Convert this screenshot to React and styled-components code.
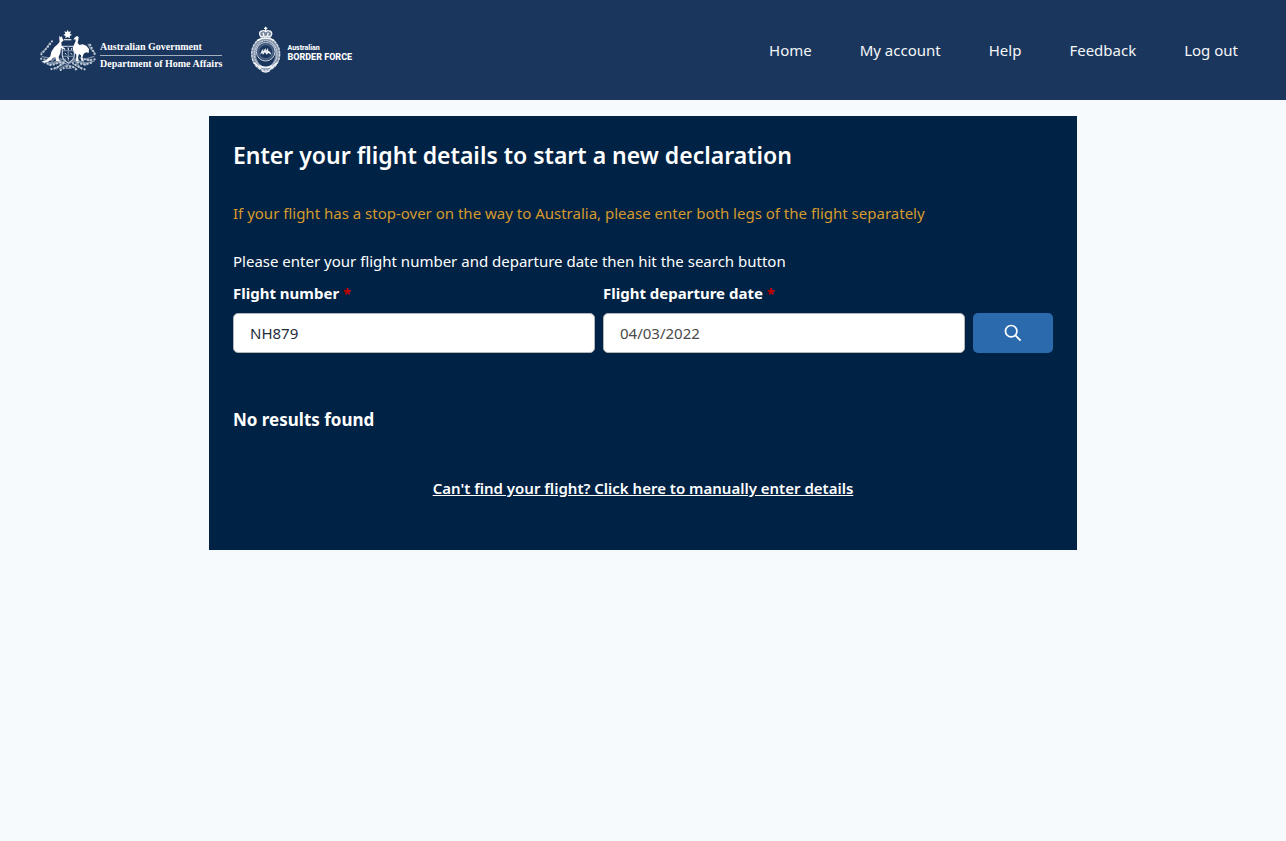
import React, { useState } from "react";
import styled, { createGlobalStyle } from "styled-components";

const navItems = ["Home", "My account", "Help", "Feedback", "Log out"];

const CoatOfArms = () => (
  <svg width="64" height="54" viewBox="0 0 192 162" fill="none" aria-hidden="true">
    {/* wattle */}
    <g stroke="#7d8fa8" strokeWidth="4">
      <path d="M14 91q20-15 28-33M18 115q35 12 64-7M178 91q-15-11-22-29M176 114q-36 15-66-6" />
      <path d="M35 126q36-20 60-1q24-21 62 0M53 139l32-18m53 17-30-17M70 138q26-23 54 2" />
      <path d="M17 101l22 4-15 12 33-13-18 23 37-21M175 100l-22 7 17 9-36-11 17 22-35-20" />
      <path d="M51 123l38-9m-28 25 28-32m49 33-26-32m-23 28h18" />
    </g>
    <g stroke="#c3cdd9" strokeWidth="6" strokeLinecap="round" strokeDasharray="1 9">
      <path d="M16 94l26-30 6-9M15 107l22 5 15-4M25 118l22 9 23-9 18 3M46 138l16-4 20-14M176 93l-14-29M176 109l-18 3-14-4M165 120l-23 5-22-9M146 139l-15-6-20-13M74 141l17-10 20 1 11 9" />
    </g>
    {/* star */}
    <path
      d="M95 20l3 7 7-2-3 7 6 4-7 3 1 7-7-4-7 4 1-7-7-3 6-4-3-7 7 2z"
      fill="#fff"
    />
    <path d="M84 50h22" stroke="#cfd7e1" strokeWidth="4" />
    {/* shield */}
    <path d="M79 70h36v27q0 14-18 23-18-9-18-23z" stroke="#b8c4d3" strokeWidth="4" />
    <path d="M80 83h34M97 70v45M81 100h31" stroke="#71849f" strokeWidth="4" />
    <path d="M86 75v6m11-6v6m10-6v6M87 90l4 5m12-5l6 5m-15 7l5 6" stroke="#dce2e9" strokeWidth="3" />
    {/* kangaroo */}
    <path
      d="M70 38l4 5 4-3 1 6 4 6-4 4-3 1 1 12 8 6-1 4-9-4-2 15-5 12 1 8 5 5-14-1-2-12-8 3-13 11-15 2-6-1 15-5 12-12 3-14 9-13 10-9 6-8-1-6z"
      fill="#fff"
    />
    {/* emu */}
    <path
      d="M117 43l6-4 5 3-1 8-2 9 5 7 10-2 11 4 8 10-1 12-7-2-8 4-4 12 4 10-7-1-1-16-6-4-3 10 2 12-8-1 1-19-8-9-3-12 5-11 4-9-1-5-6 1z"
      fill="#fff"
    />
  </svg>
);

const BorderForceCrest = () => (
  <svg width="32" height="49" viewBox="15 18 96 147" fill="none" aria-hidden="true">
    {/* crown */}
    <path
      d="M47 49q-8-12 3-16 7-3 12 2 5-5 12-2 11 4 3 16z"
      fill="#708198"
      stroke="#f1f4f7"
      strokeWidth="4"
    />
    <path d="M62 20v16M57 25h10M54 38l3 9m13-9-3 9M47 54h30" stroke="#fff" strokeWidth="4" />
    {/* wreath */}
    <ellipse cx="62" cy="102" rx="36" ry="45" stroke="#8999b0" strokeWidth="14" />
    <ellipse cx="62" cy="102" rx="42" ry="49" stroke="#d5dde6" strokeWidth="4" strokeDasharray="8 3" />
    <ellipse cx="62" cy="102" rx="34" ry="40" stroke="#dce2ea" strokeWidth="3" strokeDasharray="5 3" />
    <path d="M36 62q26-15 52 0M28 128l20 18m28 0 20-18" stroke="#fff" strokeWidth="4" />
    <circle cx="62" cy="95" r="28" fill="#3d567a" stroke="#c5d0dc" strokeWidth="3" />
    <circle cx="62" cy="95" r="21" fill="#1b365d" stroke="#6c819c" strokeWidth="2" />
    <path
      d="M46 104q2-14 9-18l-2 9 9-11 1 8 6-8 1 9q7 1 9 11l-9-5-5 5-5-7-6 7-3-5z"
      fill="#e9edf2"
    />
    <path d="M43 137q19 11 38 0M50 152q12 8 24 0" stroke="#eef2f6" strokeWidth="5" />
  </svg>
);

const SearchIcon = () => (
  <svg width="18" height="18" viewBox="0 0 18 18" fill="none" aria-hidden="true">
    <circle cx="7.2" cy="7.2" r="5.7" stroke="#fff" strokeWidth="1.7" />
    <path d="M11.2 11.2l5.4 5.4" stroke="#fff" strokeWidth="1.9" />
  </svg>
);

const App = () => {
  const [flightNumber, setFlightNumber] = useState("NH879");
  const [departureDate, setDepartureDate] = useState("04/03/2022");

  return (
    <>
      <GlobalStyle />
      <Header>
        <Logos>
          <CoatOfArms />
          <Department>
            <span>Australian Government</span>
            <span>Department of Home Affairs</span>
          </Department>
          <BorderForceCrest />
          <BorderForce>
            <small>Australian</small>
            <span>BORDER FORCE</span>
          </BorderForce>
        </Logos>
        <Nav>
          {navItems.map((item) => (
            <a href="#" key={item}>
              {item}
            </a>
          ))}
        </Nav>
      </Header>
      <Card>
        <Title>Enter your flight details to start a new declaration</Title>
        <Notice>
          If your flight has a stop-over on the way to Australia, please enter
          both legs of the flight separately
        </Notice>
        <Text>
          Please enter your flight number and departure date then hit the search
          button
        </Text>
        <SearchForm onSubmit={(e) => e.preventDefault()}>
          <Field>
            <Label htmlFor="flightNumber">
              Flight number <Required>*</Required>
            </Label>
            <Input
              id="flightNumber"
              value={flightNumber}
              onChange={(e) => setFlightNumber(e.target.value)}
            />
          </Field>
          <Field>
            <Label htmlFor="departureDate">
              Flight departure date <Required>*</Required>
            </Label>
            <Input
              id="departureDate"
              $color="#4a4a4a"
              value={departureDate}
              onChange={(e) => setDepartureDate(e.target.value)}
            />
          </Field>
          <SearchButton type="submit" aria-label="Search">
            <SearchIcon />
          </SearchButton>
        </SearchForm>
        <Results>No results found</Results>
        <ManualLink href="#">
          Can't find your flight? Click here to manually enter details
        </ManualLink>
      </Card>
    </>
  );
};

const GlobalStyle = createGlobalStyle`
  * {
    box-sizing: border-box;
  }

  body {
    margin: 0;
    background-color: #f7fafc;
    color: #fff;
    font-family: "Segoe UI", "Noto Sans", sans-serif;
    font-size: 15px;
    line-height: 24px;
  }
`;

const Header = styled.header`
  display: flex;
  align-items: center;
  justify-content: space-between;
  min-height: 100px;
  padding: 0 48px 0 36px;
  background-color: #1b365d;
`;

const Logos = styled.div`
  display: flex;
  align-items: center;
`;

const Department = styled.div`
  display: flex;
  flex-direction: column;
  margin-right: 28px;
  padding-top: 10px;
  font-family: "Liberation Serif", serif;
  font-size: 10px;
  font-weight: bold;
  line-height: 16px;
  white-space: nowrap;

  span + span {
    border-top: 1px solid #a4afbe;
  }
`;

const BorderForce = styled.div`
  display: flex;
  flex-direction: column;
  margin-left: 5px;
  padding-top: 6px;
  font-family: Roboto, "Liberation Sans", sans-serif;
  font-size: 9px;
  font-weight: 800;
  line-height: 10px;
  white-space: nowrap;

  small {
    font-size: 7px;
    line-height: 8px;
  }
`;

const Nav = styled.nav`
  display: flex;
  gap: 48px;

  a {
    color: #f4f6f8;
    text-decoration: none;
  }
`;

const Card = styled.main`
  display: flex;
  flex-direction: column;
  max-width: 868px;
  margin: 16px auto;
  padding: 23px 24px 50px;
  background-color: #002244;
`;

const Title = styled.h1`
  margin: 0 0 30px;
  font-size: 23px;
  font-weight: 600;
  line-height: 32px;
`;

const Text = styled.p`
  margin: 0 0 8px;
`;

const Notice = styled(Text)`
  margin-bottom: 24px;
  color: #d69a2d;
`;

const SearchForm = styled.form`
  display: grid;
  grid-template-columns: 1fr 1fr 80px;
  align-items: end;
  gap: 8px;
`;

const Field = styled.div`
  display: flex;
  flex-direction: column;
  gap: 8px;
  min-width: 0;
`;

const Label = styled.label`
  font-weight: 700;
`;

const Required = styled.span`
  color: #c40000;
`;

const Input = styled.input`
  width: 100%;
  height: 40px;
  padding: 0 16px;
  border: 1px solid #b5b5b5;
  border-radius: 5px;
  background-color: #fff;
  color: ${(props) => props.$color || "#1f2d3d"};
  font: inherit;
`;

const SearchButton = styled.button`
  display: flex;
  align-items: center;
  justify-content: center;
  height: 40px;
  padding: 0;
  border: none;
  border-radius: 5px;
  background-color: #2b6aad;
  cursor: pointer;
`;

const Results = styled.h2`
  margin: 55px 0 44px;
  font-size: 17px;
  font-weight: 700;
  line-height: 24px;
`;

const ManualLink = styled.a`
  align-self: center;
  color: #fff;
  font-weight: 600;
`;

export default App;
